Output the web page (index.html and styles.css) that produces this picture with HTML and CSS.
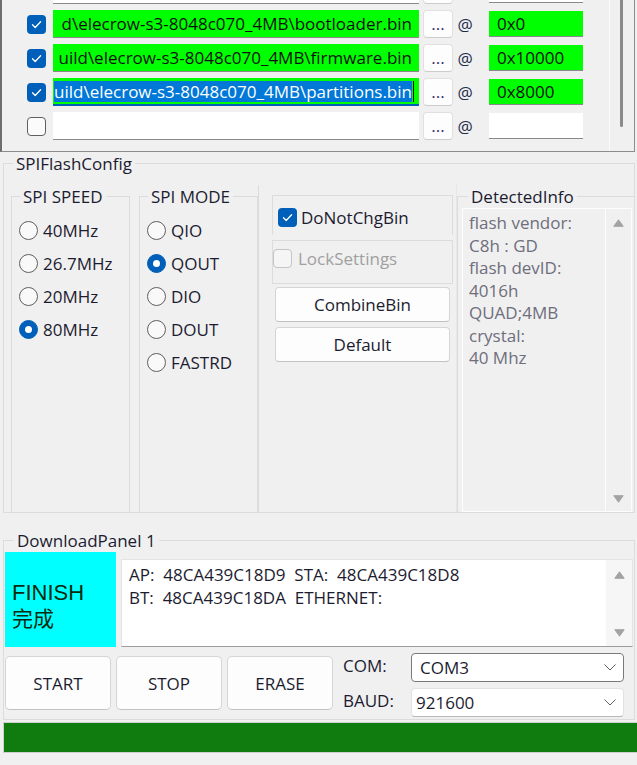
FILE: index.html
```html
<!DOCTYPE html>
<html>
<head>
<meta charset="utf-8">
<link rel="stylesheet" href="styles.css">
</head>
<body>
<div class="files">
  <div class="rows">
    <div class="row">
      <span class="chk off"></span>
      <div class="path white"></div>
      <div class="browse"></div>
      <span class="at"></span>
      <div class="addr white"></div>
    </div>
    <div class="row">
      <span class="chk on"><svg viewBox="0 0 19 19" width="19" height="19"><path d="M5.5 9.8 L8.2 12.5 L13.6 6.8" fill="none" stroke="#fff" stroke-width="1.3" stroke-linecap="round" stroke-linejoin="round"/></svg></span>
      <div class="path green"><span>d\elecrow-s3-8048c070_4MB\bootloader.bin</span></div>
      <div class="browse">...</div>
      <span class="at">@</span>
      <div class="addr green">0x0</div>
    </div>
    <div class="row">
      <span class="chk on"><svg viewBox="0 0 19 19" width="19" height="19"><path d="M5.5 9.8 L8.2 12.5 L13.6 6.8" fill="none" stroke="#fff" stroke-width="1.3" stroke-linecap="round" stroke-linejoin="round"/></svg></span>
      <div class="path green"><span>uild\elecrow-s3-8048c070_4MB\firmware.bin</span></div>
      <div class="browse">...</div>
      <span class="at">@</span>
      <div class="addr green">0x10000</div>
    </div>
    <div class="row">
      <span class="chk on"><svg viewBox="0 0 19 19" width="19" height="19"><path d="M5.5 9.8 L8.2 12.5 L13.6 6.8" fill="none" stroke="#fff" stroke-width="1.3" stroke-linecap="round" stroke-linejoin="round"/></svg></span>
      <div class="path green focus"><span class="sel">uild\elecrow-s3-8048c070_4MB\partitions.bin</span><span class="caret"></span></div>
      <div class="browse">...</div>
      <span class="at">@</span>
      <div class="addr green">0x8000</div>
    </div>
    <div class="row">
      <span class="chk off"></span>
      <div class="path white"></div>
      <div class="browse">...</div>
      <span class="at">@</span>
      <div class="addr white"></div>
    </div>
  </div>
  <div class="vscroll"><div class="thumb"></div></div>
</div>

<fieldset class="spi">
  <legend>SPIFlashConfig</legend>
  <div class="cols">
    <fieldset class="grp">
      <legend>SPI SPEED</legend>
      <div class="radios">
        <div class="radio"><span class="dot"></span>40MHz</div>
        <div class="radio"><span class="dot"></span>26.7MHz</div>
        <div class="radio"><span class="dot"></span>20MHz</div>
        <div class="radio"><span class="dot on"></span>80MHz</div>
      </div>
    </fieldset>
    <fieldset class="grp">
      <legend>SPI MODE</legend>
      <div class="radios">
        <div class="radio"><span class="dot"></span>QIO</div>
        <div class="radio"><span class="dot on"></span>QOUT</div>
        <div class="radio"><span class="dot"></span>DIO</div>
        <div class="radio"><span class="dot"></span>DOUT</div>
        <div class="radio"><span class="dot"></span>FASTRD</div>
      </div>
    </fieldset>
    <div class="opts">
      <div class="box1">
        <span class="chk on"><svg viewBox="0 0 19 19" width="19" height="19"><path d="M5.5 9.8 L8.2 12.5 L13.6 6.8" fill="none" stroke="#fff" stroke-width="1.3" stroke-linecap="round" stroke-linejoin="round"/></svg></span>
        <span>DoNotChgBin</span>
      </div>
      <div class="box2">
        <span class="chk dis"></span>
        <span>LockSettings</span>
      </div>
      <div class="btn">CombineBin</div>
      <div class="btn">Default</div>
    </div>
    <fieldset class="info">
      <legend>DetectedInfo</legend>
      <div class="ta">
        <div class="ta-text">flash vendor:<br>C8h : GD<br>flash devID:<br>4016h<br>QUAD;4MB<br>crystal:<br>40 Mhz</div>
        <div class="sb">
          <svg width="11" height="8" viewBox="0 0 11 8"><path d="M5.5 0.8 L10.2 7.3 L0.8 7.3 Z" fill="#a3a3a3" stroke="#a3a3a3" stroke-linejoin="round"/></svg>
          <svg width="11" height="8" viewBox="0 0 11 8"><path d="M5.5 7.2 L10.2 0.7 L0.8 0.7 Z" fill="#a3a3a3" stroke="#a3a3a3" stroke-linejoin="round"/></svg>
        </div>
      </div>
    </fieldset>
  </div>
</fieldset>

<fieldset class="dl">
  <legend>DownloadPanel 1</legend>
  <div class="dl-top">
    <div class="finish">
      <div class="fin1">FINISH</div>
      <div class="fin2">完成</div>
    </div>
    <div class="mac">
      <div class="mac-text">AP:  48CA439C18D9  STA:  48CA439C18D8
BT:  48CA439C18DA  ETHERNET:</div>
      <div class="sb">
        <svg width="11" height="8" viewBox="0 0 11 8"><path d="M5.5 0.8 L10.2 7.3 L0.8 7.3 Z" fill="#a3a3a3" stroke="#a3a3a3" stroke-linejoin="round"/></svg>
        <svg width="11" height="8" viewBox="0 0 11 8"><path d="M5.5 7.2 L10.2 0.7 L0.8 0.7 Z" fill="#a3a3a3" stroke="#a3a3a3" stroke-linejoin="round"/></svg>
      </div>
    </div>
  </div>
  <div class="dl-bot">
    <div class="big">START</div>
    <div class="big">STOP</div>
    <div class="big">ERASE</div>
    <div class="ports">
      <span class="lbl">COM:</span>
      <div class="combo focus"><span>COM3</span><svg width="12" height="7" viewBox="0 0 12 7"><path d="M0.5 0.5 L6 6 L11.5 0.5" fill="none" stroke="#606060" stroke-width="1"/></svg></div>
      <span class="lbl">BAUD:</span>
      <div class="combo"><span>921600</span><svg width="12" height="7" viewBox="0 0 12 7"><path d="M0.5 0.5 L6 6 L11.5 0.5" fill="none" stroke="#606060" stroke-width="1"/></svg></div>
    </div>
  </div>
</fieldset>

<div class="prog"></div>
</body>
</html>
```

FILE: styles.css
```css
body {
  margin: 0;
  width: 637px;
  height: 765px;
  overflow: hidden;
  background: #f0f0f0;
  font-family: "Open Sans", "Noto Sans", sans-serif;
  font-size: 17px;
  color: #1c1c30;
}

/* file list */
.files {
  display: flex;
  height: 152px;
  width: 635px;
  box-sizing: border-box;
  border-left: 2px solid #6e6e6e;
  border-right: 1px solid #8c8c8c;
  border-bottom: 1px solid #8c8c8c;
  overflow: hidden;
}
.rows {
  flex: 1;
  display: flex;
  flex-direction: column;
  gap: 6px;
  margin-top: -24px;
  padding-left: 25px;
}
.row {
  display: flex;
  align-items: center;
  height: 28px;
  flex: none;
}
.chk {
  flex: none;
  width: 19px;
  height: 19px;
  box-sizing: border-box;
  border-radius: 4px;
  display: flex;
}
.chk.on { background: #005fb8; }
.chk.off { border: 1px solid #5f5f5f; background: #fbfbfb; }
.chk.dis { border: 1px solid #c4c4c4; background: #f5f5f5; }
.path {
  flex: none;
  margin-left: 7px;
  width: 366px;
  height: 28px;
  box-sizing: border-box;
  border-bottom: 1px solid #8a8a8a;
  overflow: hidden;
  display: flex;
  justify-content: flex-end;
  align-items: center;
  padding-right: 7px;
  white-space: nowrap;
  color: #101010;
}
.green { background: #00ff00; }
.white { background: #ffffff; }
.path.focus {
  border-bottom: 2px solid #005fb8;
  padding-right: 5px;
}
.sel {
  background: #0078d7;
  color: #ffffff;
  line-height: 21px;
}
.caret {
  flex: none;
  width: 1px;
  height: 21px;
  background: #000;
  margin-left: 1px;
}
.browse {
  flex: none;
  margin-left: 4px;
  width: 30px;
  height: 28px;
  box-sizing: border-box;
  border: 1px solid #e0e0e0;
  border-bottom-color: #cccccc;
  border-radius: 4px;
  background: #fdfdfd;
  text-align: center;
  line-height: 26px;
  color: #3b2f6e;
}
.at {
  flex: none;
  margin-left: 4px;
  width: 16px;
  text-align: center;
  color: #1e2c4c;
}
.addr {
  flex: none;
  margin-left: 16px;
  width: 94px;
  height: 26px;
  box-sizing: border-box;
  border-bottom: 1px solid #8a8a8a;
  padding-left: 8px;
  line-height: 25px;
  color: #101010;
}
.vscroll {
  flex: none;
  width: 25px;
  box-sizing: border-box;
  border-left: 1px solid #fbfbfb;
  padding-left: 10px;
}
.thumb {
  width: 3px;
  height: 127px;
  background: #8a8a8a;
  border-radius: 0 0 2px 2px;
}

/* group boxes */
fieldset {
  margin: 0;
  padding: 0;
  border: 1px solid #dcdcdc;
  min-width: 0;
}
legend {
  padding: 0 3px;
  line-height: 23px;
}
.spi {
  margin: 0 2px 0 3px;
  padding: 10px 0 0 7px;
}
.spi > legend { margin-left: 2px; }
.cols {
  display: flex;
  height: 327px;
}
.grp {
  flex: none;
  width: 119px;
  box-sizing: border-box;
  border-bottom: none;
  padding: 0 0 0 7px;
}
.grp > legend { margin-left: 1px; }
.grp + .grp { margin-left: 9px; }
.radios {
  padding-top: 6px;
  display: flex;
  flex-direction: column;
}
.radio {
  height: 33px;
  display: flex;
  align-items: center;
  gap: 5px;
  white-space: nowrap;
}
.dot {
  flex: none;
  width: 19px;
  height: 19px;
  box-sizing: border-box;
  border-radius: 50%;
  border: 1px solid #5f5f5f;
  background: #f9f9f9;
}
.dot.on {
  background: #005fb8;
  border-color: #005fb8;
  display: flex;
  align-items: center;
  justify-content: center;
}
.dot.on::after {
  content: "";
  width: 7px;
  height: 7px;
  border-radius: 50%;
  background: #ffffff;
}
.opts {
  flex: none;
  width: 199px;
  box-sizing: border-box;
  border-left: 1px solid #dcdcdc;
  border-right: 1px solid #e6e6e6;
  padding: 10px 0 0 13px;
  display: flex;
  flex-direction: column;
  align-items: flex-start;
}
.box1 {
  width: 181px;
  height: 40px;
  box-sizing: border-box;
  border: 1px solid #dcdcdc;
  border-bottom: none;
  display: flex;
  align-items: center;
  padding: 3px 0 0 5px;
  gap: 4px;
}
.box2 {
  margin-top: 5px;
  width: 181px;
  height: 44px;
  box-sizing: border-box;
  border: 1px solid #dcdcdc;
  display: flex;
  align-items: center;
  padding-bottom: 7px;
  gap: 6px;
  color: #a0a0a0;
}
.btn {
  margin: 3px 0 0 3px;
  width: 175px;
  height: 35px;
  box-sizing: border-box;
  background: #fdfdfd;
  border: 1px solid #d5d5d5;
  border-bottom-color: #c2c2c2;
  border-radius: 4px;
  display: flex;
  align-items: center;
  justify-content: center;
}
.btn + .btn { margin-top: 5px; }
.info {
  flex: 1;
  border-right: none;
  border-bottom: none;
  padding: 0 0 0 4px;
}
.info > legend { margin-left: 6px; }
.ta {
  width: 170px;
  height: 304px;
  box-sizing: border-box;
  border: 1px solid #fdfdfd;
  display: flex;
}
.ta-text {
  flex: 1;
  padding: 3px 0 0 6px;
  line-height: 22.5px;
  color: #6e6e7c;
  white-space: nowrap;
}
.sb {
  flex: none;
  width: 26px;
  box-sizing: border-box;
  border-left: 1px solid #fdfdfd;
  display: flex;
  flex-direction: column;
  align-items: center;
  justify-content: space-between;
  padding: 10px 0 8px;
}

/* download panel */
.dl {
  margin: 16px 2px 0 3px;
  padding: 0 0 2px 1px;
}
.dl > legend { margin-left: 9px; }
.dl-top {
  display: flex;
  align-items: flex-end;
}
.finish {
  width: 111px;
  height: 95px;
  box-sizing: border-box;
  background: #00ffff;
  padding: 28px 0 0 7px;
  color: #0c2a0c;
}
.fin1 {
  font-family: "Liberation Sans", Arial, sans-serif;
  font-size: 22px;
  line-height: 25px;
}
.fin2 {
  font-family: "Noto Sans CJK SC", sans-serif;
  font-size: 21px;
  line-height: 24px;
}
.mac {
  margin-left: 5px;
  width: 512px;
  height: 88px;
  box-sizing: border-box;
  background: #ffffff;
  border: 1px solid #e4e4e4;
  border-bottom-color: #9c9c9c;
  display: flex;
}
.mac-text {
  flex: 1;
  padding: 3px 0 0 7px;
  line-height: 23px;
  white-space: pre;
}
.mac .sb {
  border-left: none;
  background: #f6f6f6;
  padding: 11px 0 9px;
}
.dl-bot {
  display: flex;
  align-items: flex-start;
  margin-top: 6px;
}
.big {
  margin-top: 3px;
  width: 106px;
  height: 54px;
  box-sizing: border-box;
  background: #fdfdfd;
  border: 1px solid #d5d5d5;
  border-bottom-color: #c2c2c2;
  border-radius: 5px;
  display: flex;
  align-items: center;
  justify-content: center;
}
.big + .big { margin-left: 5px; }
.ports {
  margin-left: 10px;
  display: grid;
  grid-template-columns: 68px 213px;
  grid-template-rows: 29px 29px;
  row-gap: 6px;
}
.lbl {
  align-self: center;
  padding-bottom: 4px;
}
.combo {
  box-sizing: border-box;
  background: #ffffff;
  border: 1px solid #e2e2e2;
  border-bottom-color: #b8b8b8;
  border-radius: 4px;
  display: flex;
  align-items: center;
  justify-content: space-between;
  padding: 0 7px 0 4px;
}
.combo.focus {
  border: 1px solid #7a7a7a;
  padding-left: 8px;
}
.prog {
  margin: 2px 0 0 3px;
  height: 31px;
  box-sizing: border-box;
  background: #107c10;
  border: 1px solid #cfcfcf;
  border-right: none;
}
```
